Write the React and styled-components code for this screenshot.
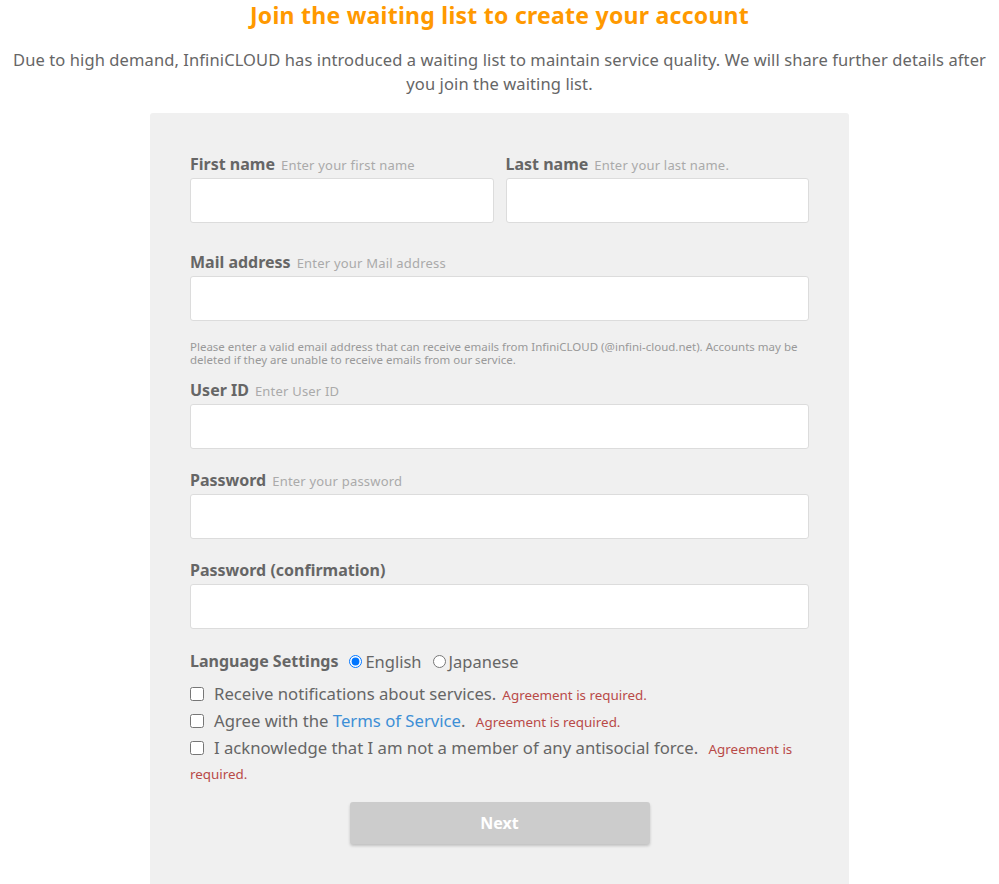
import React, { useState } from "react";
import styled, { createGlobalStyle } from "styled-components";

const GlobalStyle = createGlobalStyle`
  body {
    margin: 0;
    background: #fff;
    font-family: "Noto Sans", "Open Sans", sans-serif;
    color: #666;
  }
`;

const agreements = [
  { id: "notify", text: "Receive notifications about services." },
  { id: "terms", text: "Agree with the ", link: "Terms of Service", after: ". " },
  { id: "antisocial", text: "I acknowledge that I am not a member of any antisocial force. " },
];

const App = () => {
  const [lang, setLang] = useState("en");
  const [checks, setChecks] = useState({});

  return (
    <Page>
      <GlobalStyle />
      <Title>Join the waiting list to create your account</Title>
      <Intro>
        Due to high demand, InfiniCLOUD has introduced a waiting list to maintain service
        quality. We will share further details after you join the waiting list.
      </Intro>
      <Panel>
        <NameRow>
          <Field>
            <LabelLine>
              <FieldLabel>First name</FieldLabel>
              <Hint>Enter your first name</Hint>
            </LabelLine>
            <TextInput />
          </Field>
          <Field>
            <LabelLine>
              <FieldLabel>Last name</FieldLabel>
              <Hint>Enter your last name.</Hint>
            </LabelLine>
            <TextInput />
          </Field>
        </NameRow>

        <Field $top={29}>
          <LabelLine>
            <FieldLabel>Mail address</FieldLabel>
            <Hint>Enter your Mail address</Hint>
          </LabelLine>
          <TextInput type="email" />
          <Note>
            Please enter a valid email address that can receive emails from InfiniCLOUD
            (@infini-cloud.net). Accounts may be deleted if they are unable to receive emails
            from our service.
          </Note>
        </Field>

        <Field $top={14}>
          <LabelLine>
            <FieldLabel>User ID</FieldLabel>
            <Hint>Enter User ID</Hint>
          </LabelLine>
          <TextInput />
        </Field>

        <Field $top={21}>
          <LabelLine>
            <FieldLabel>Password</FieldLabel>
            <Hint>Enter your password</Hint>
          </LabelLine>
          <TextInput type="password" />
        </Field>

        <Field $top={21}>
          <LabelLine>
            <FieldLabel>Password (confirmation)</FieldLabel>
          </LabelLine>
          <TextInput type="password" />
        </Field>

        <LangRow>
          <FieldLabel>Language Settings</FieldLabel>
          <RadioLabel>
            <Radio
              type="radio"
              name="lang"
              checked={lang === "en"}
              onChange={() => setLang("en")}
            />
            English
          </RadioLabel>
          <RadioLabel>
            <Radio
              type="radio"
              name="lang"
              checked={lang === "ja"}
              onChange={() => setLang("ja")}
            />
            Japanese
          </RadioLabel>
        </LangRow>

        <Agreements>
          {agreements.map((a) => (
            <CheckLine key={a.id}>
              <Check
                type="checkbox"
                checked={!!checks[a.id]}
                onChange={() => setChecks({ ...checks, [a.id]: !checks[a.id] })}
              />
              {a.text}
              {a.link && <TermsLink href="#">{a.link}</TermsLink>}
              {a.after}
              <Required>Agreement is required.</Required>
            </CheckLine>
          ))}
        </Agreements>

        <ButtonRow>
          <NextButton disabled>Next</NextButton>
        </ButtonRow>
      </Panel>
    </Page>
  );
};

export default App;

// styles
const Page = styled.div`
  text-align: center;
  padding-bottom: 40px;
`;

const Title = styled.h2`
  margin: 0;
  padding-top: 1px;
  font-size: 23px;
  letter-spacing: 0.25px;
  line-height: 28px;
  font-weight: bold;
  color: #ff9900;
`;

const Intro = styled.p`
  margin: 19px 0 0;
  padding: 0 8px;
  font-size: 16.5px;
  letter-spacing: 0.1px;
  line-height: 24px;
  color: #666;
`;

const Panel = styled.div`
  width: 699px;
  box-sizing: border-box;
  margin: 17px auto 0;
  padding: 41px 40px 60px;
  background: #f0f0f0;
  border-radius: 3px;
  text-align: left;
`;

const NameRow = styled.div`
  display: grid;
  grid-template-columns: 1fr 1fr;
  gap: 12px;
`;

const Field = styled.div`
  margin-top: ${(p) => p.$top || 0}px;
`;

const LabelLine = styled.div`
  display: flex;
  align-items: baseline;
  height: 20px;
  line-height: 20px;
  margin-bottom: 4px;
`;

const FieldLabel = styled.span`
  font-size: 16px;
  font-weight: bold;
  color: #666;
`;

const Hint = styled.span`
  margin-left: 6px;
  font-size: 13px;
  letter-spacing: 0.2px;
  color: #aaa;
`;

const TextInput = styled.input`
  display: block;
  width: 100%;
  height: 45px;
  box-sizing: border-box;
  border: 1px solid #dcdcdc;
  border-radius: 3px;
  background: #fff;
  padding: 0 10px;
  font-family: inherit;
  font-size: 15px;
  outline: none;
`;

const Note = styled.p`
  margin: 19px 0 0;
  font-size: 11.5px;
  line-height: 13px;
  color: #999;
`;

const LangRow = styled.div`
  display: flex;
  align-items: center;
  margin-top: 22px;
  height: 20px;
`;

const RadioLabel = styled.label`
  display: flex;
  align-items: center;
  font-size: 16.5px;
  color: #666;
  margin-left: 11px;
`;

const Radio = styled.input`
  width: 13px;
  height: 13px;
  margin: 0 3px 0 0;
`;

const Agreements = styled.div`
  margin-top: 10px;
`;

const CheckLine = styled.div`
  font-size: 16.7px;
  line-height: 25px;
  color: #666;
  margin-bottom: 2px;
`;

const Check = styled.input`
  width: 14px;
  height: 14px;
  margin: 0 10px 0 0;
  vertical-align: -1px;
`;

const TermsLink = styled.a`
  color: #3d8fd6;
  text-decoration: none;
`;

const Required = styled.span`
  margin-left: 6px;
  font-size: 13.4px;
  line-height: 1;
  color: #b94a48;
`;

const ButtonRow = styled.div`
  display: flex;
  justify-content: center;
  margin-top: 17px;
`;

const NextButton = styled.button`
  width: 300px;
  height: 42px;
  border: none;
  border-radius: 3px;
  background: #cccccc;
  color: #fff;
  font-family: inherit;
  font-size: 16px;
  font-weight: bold;
  box-shadow: 0 2px 3px rgba(0, 0, 0, 0.2);
`;
